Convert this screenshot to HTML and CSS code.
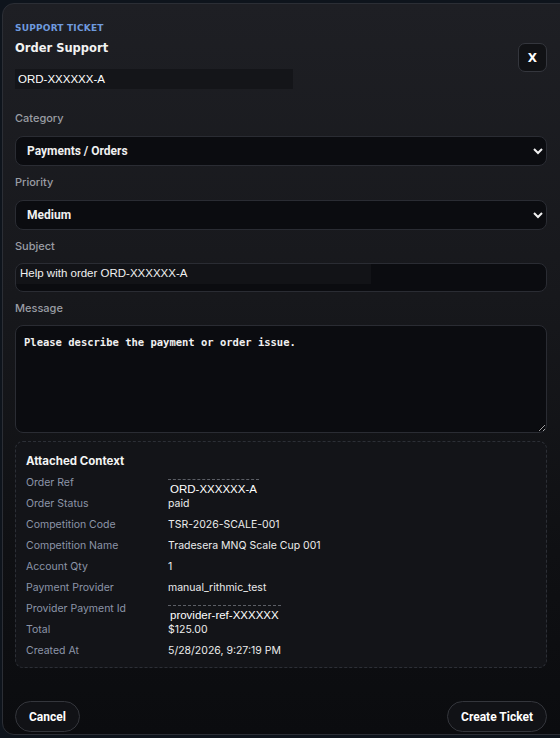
FILE: index.html
```html
<!DOCTYPE html>
<html lang="en">
<head>
    <meta charset="UTF-8">
    <meta name="viewport" content="width=device-width, initial-scale=1.0">
    <title>Support Ticket</title>
    <link rel="stylesheet" href="styles.css">
</head>
<body>

    <div class="modal">
        <div class="modal-head">
            <div class="head-text">
                <div class="eyebrow">SUPPORT TICKET</div>
                <h2>Order Support</h2>
                <div class="ref-box">ORD-XXXXXX-A</div>
            </div>
            <button class="close-btn" type="button">X</button>
        </div>

        <form class="ticket-form">
            <label for="category">Category</label>
            <select id="category" name="category">
                <option>Payments / Orders</option>
            </select>

            <label for="priority">Priority</label>
            <select id="priority" name="priority">
                <option>Medium</option>
            </select>

            <label for="subject" class="tight">Subject</label>
            <input type="text" id="subject" name="subject" value="Help with order ORD-XXXXXX-A">

            <label for="message" class="tight">Message</label>
            <textarea id="message" name="message">Please describe the payment or order issue.</textarea>

            <div class="context">
                <div class="context-title">Attached Context</div>
                <div class="ctx-row"><span class="ctx-key">Order Ref</span><span class="ctx-val masked">ORD-XXXXXX-A</span></div>
                <div class="ctx-row"><span class="ctx-key">Order Status</span><span class="ctx-val">paid</span></div>
                <div class="ctx-row"><span class="ctx-key">Competition Code</span><span class="ctx-val">TSR-2026-SCALE-001</span></div>
                <div class="ctx-row"><span class="ctx-key">Competition Name</span><span class="ctx-val">Tradesera MNQ Scale Cup 001</span></div>
                <div class="ctx-row"><span class="ctx-key">Account Qty</span><span class="ctx-val">1</span></div>
                <div class="ctx-row"><span class="ctx-key">Payment Provider</span><span class="ctx-val">manual_rithmic_test</span></div>
                <div class="ctx-row"><span class="ctx-key">Provider Payment Id</span><span class="ctx-val masked">provider-ref-XXXXXX</span></div>
                <div class="ctx-row"><span class="ctx-key">Total</span><span class="ctx-val">$125.00</span></div>
                <div class="ctx-row"><span class="ctx-key">Created At</span><span class="ctx-val">5/28/2026, 9:27:19 PM</span></div>
            </div>

            <div class="actions">
                <button type="button" class="pill">Cancel</button>
                <button type="submit" class="pill">Create Ticket</button>
            </div>
        </form>
    </div>

</body>
</html>
```

FILE: styles.css
```css
body {
    margin: 0;
    background-color: #0e141c;
    font-family: Inter, "Noto Sans", Arial, sans-serif;
    color: #e6e6e8;
    overflow: hidden;
}
.modal {
    margin: 3px 0 0 2px;
    width: 572px;
    height: 732px;
    box-sizing: border-box;
    padding: 17px 26px 0 12px;
    border: 1px solid #2b2e35;
    border-radius: 12px;
    background: linear-gradient(180deg, #1e1f24 0%, #17181c 40%, #0f1013 75%, #0b0c0f 100%);
}
.modal-head {
    display: flex;
    align-items: center;
    justify-content: space-between;
}
.eyebrow {
    font-family: "DejaVu Sans", sans-serif;
    font-size: 9px;
    font-weight: bold;
    letter-spacing: 0.2px;
    color: #6e9ade;
    line-height: 14px;
}
h2 {
    margin: 4px 0 0;
    font-family: "DejaVu Sans", sans-serif;
    font-size: 11.5px;
    font-weight: bold;
    line-height: 18px;
    color: #f2f2f2;
}
.ref-box {
    margin-top: 12px;
    width: 275px;
    height: 20px;
    line-height: 20px;
    padding-left: 3px;
    background-color: #141519;
    font-family: "Liberation Sans", Arial, sans-serif;
    font-size: 11.5px;
    color: #ffffff;
}
.close-btn {
    width: 29px;
    height: 29px;
    margin-top: 5px;
    background-color: #111215;
    border: 1px solid #34363d;
    border-radius: 7px;
    color: #ffffff;
    font-family: "DejaVu Sans", sans-serif;
    font-weight: bold;
    font-size: 12px;
    padding: 0;
}
.ticket-form {
    display: flex;
    flex-direction: column;
    margin-top: 21px;
}
label {
    font-size: 11px;
    font-weight: 500;
    color: #9a9da4;
    line-height: 16px;
    margin-bottom: 10px;
}
label.tight {
    margin-bottom: 9px;
}
select, input[type="text"], textarea {
    box-sizing: border-box;
    width: 100%;
    background-color: #0b0c10;
    border: 1px solid #2a2c33;
    border-radius: 8px;
    color: #f0f0f0;
    color-scheme: dark;
    margin-bottom: 8px;
}
select {
    height: 30px;
    padding: 0 6px 0 7px;
    font-family: Roboto, sans-serif;
    font-size: 12px;
    font-weight: bold;
}
input[type="text"] {
    height: 29px;
    padding: 0 0 9px 4px;
    font-family: "Liberation Sans", Arial, sans-serif;
    font-size: 11.5px;
    background: linear-gradient(#121317, #121317) no-repeat 0 0 / 355px 20px, #0b0c10;
}
textarea {
    height: 108px;
    padding: 10px 8px;
    font-family: "DejaVu Sans Mono", monospace;
    font-size: 10.5px;
    font-weight: bold;
    resize: vertical;
}
.context {
    border: 1px dashed #2c2f36;
    border-radius: 8px;
    background-color: #131418;
    padding: 11px 10px 6px 10px;
}
.context-title {
    font-size: 11.5px;
    font-weight: bold;
    color: #f4f4f4;
    line-height: 16px;
    margin-bottom: 3px;
}
.ctx-row {
    display: flex;
    height: 21px;
    align-items: center;
    font-size: 10.5px;
}
.ctx-key {
    width: 142px;
    color: #8c95a8;
}
.ctx-val {
    color: #ececec;
}
.ctx-val.masked {
    font-family: "Liberation Sans", Arial, sans-serif;
    font-size: 11.5px;
    color: #ffffff;
    padding: 3px 2px 0;
    margin-top: 9px;
    border-top: 1px dashed #5c5f66;
}
.actions {
    display: flex;
    justify-content: space-between;
    margin-top: 33px;
}
.pill {
    height: 31px;
    padding: 0 13px;
    background-color: #111216;
    border: 1px solid #34363c;
    border-radius: 999px;
    color: #ffffff;
    font-family: Roboto, sans-serif;
    font-size: 12px;
    font-weight: bold;
    cursor: pointer;
}
.pill:hover {
    background-color: #1a1b20;
}
```
